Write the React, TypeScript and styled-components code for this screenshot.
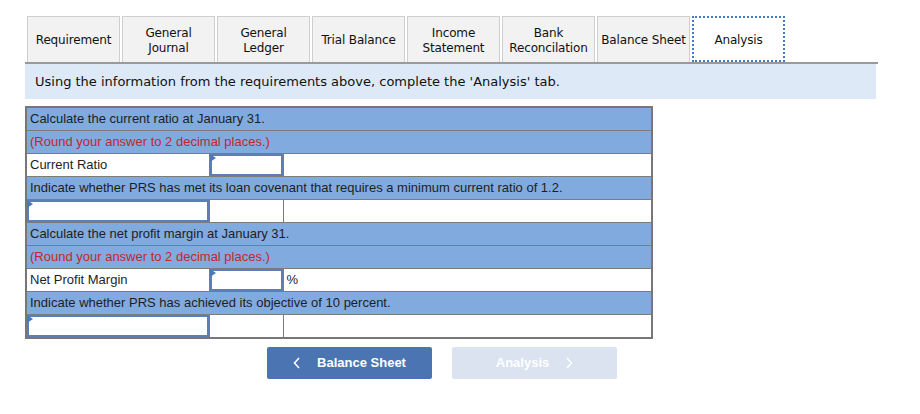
import React from 'react';
import styled, { createGlobalStyle } from 'styled-components';

const GlobalStyle = createGlobalStyle`
  body {
    margin: 0;
    background: #ffffff;
    font-family: "Liberation Sans", Arial, sans-serif;
  }
`;

const Page = styled.div`
  width: 920px;
  height: 414px;
  padding: 16px 0 0 25px;
  box-sizing: border-box;
`;

const TabBar = styled.div`
  display: flex;
  gap: 2px;
  width: 851px;
  padding-left: 2px;
  box-sizing: content-box;
  border-bottom: 2px solid #9a9a9a;
  height: 46px;
`;

const Tab = styled.div<{ $active?: boolean }>`
  width: 93px;
  height: 46px;
  box-sizing: border-box;
  display: flex;
  align-items: center;
  justify-content: center;
  text-align: center;
  padding-top: 2px;
  font-family: "DejaVu Sans", Verdana, sans-serif;
  font-size: 12px;
  line-height: 15px;
  letter-spacing: -0.15px;
  color: #111111;
  white-space: pre-line;
  background: ${(p) => (p.$active ? '#ffffff' : '#f2f2f2')};
  border: ${(p) => (p.$active ? '2px dotted #4a78c0' : '1px solid #cfcfcf')};
  border-bottom: ${(p) => (p.$active ? '2px dotted #4a78c0' : 'none')};
`;

const Instruction = styled.div`
  width: 851px;
  height: 35px;
  box-sizing: border-box;
  background: #dde9f7;
  padding-left: 10px;
  display: flex;
  align-items: center;
  font-family: "DejaVu Sans", Verdana, sans-serif;
  font-size: 13px;
  color: #111111;
`;

const Grid = styled.table`
  margin-top: 7px;
  width: 628px;
  border-collapse: collapse;
  border: 2px solid #777777;
  font-family: "Liberation Sans", Arial, sans-serif;
  font-size: 13px;
  color: #222222;
  table-layout: fixed;
`;

const Row = styled.tr<{ $blue?: boolean }>`
  height: 23px;
  background: ${(p) => (p.$blue ? '#81aadf' : '#ffffff')};
`;

const Cell = styled.td<{ $red?: boolean }>`
  border: 1px solid #7c7c7c;
  padding: 0 0 0 3px;
  height: 22px;
  box-sizing: border-box;
  color: ${(p) => (p.$red ? '#c2282b' : '#1e1e1e')};
  white-space: nowrap;
  vertical-align: middle;
`;

const InputCell = styled.td`
  border: 1px solid #7c7c7c;
  padding: 0;
  height: 22px;
  position: relative;
`;

const InputBox = styled.div`
  position: absolute;
  inset: 0;
  border: 2px solid #5a7fb8;
  background: #ffffff;
`;

const Marker = styled.span`
  position: absolute;
  left: 0;
  top: 0;
  width: 0;
  height: 0;
  border-top: 4px solid transparent;
  border-bottom: 4px solid transparent;
  border-left: 6px solid #4a78c0;
`;

const Buttons = styled.div`
  display: flex;
  justify-content: center;
  gap: 20px;
  width: 834px;
  margin-top: 8px;
`;

const NavButton = styled.button<{ $disabled?: boolean }>`
  width: 165px;
  height: 32px;
  border: none;
  border-radius: 2px;
  background: ${(p) => (p.$disabled ? '#dae3ef' : '#4a75b2')};
  color: #ffffff;
  font-family: "Liberation Sans", Arial, sans-serif;
  font-weight: bold;
  font-size: 13px;
  display: flex;
  align-items: center;
  justify-content: center;
  gap: 16px;
  padding: 0;
`;

const Chevron = ({ dir }: { dir: 'left' | 'right' }) => (
  <svg width="8" height="12" viewBox="0 0 8 12">
    <path
      d={dir === 'left' ? 'M6 1 L1.5 6 L6 11' : 'M2 1 L6.5 6 L2 11'}
      fill="none"
      stroke="#ffffff"
      strokeWidth="1.6"
    />
  </svg>
);

const Input = () => (
  <InputCell>
    <InputBox />
    <Marker />
  </InputCell>
);

const tabs = [
  'Requirement',
  'General\nJournal',
  'General\nLedger',
  'Trial Balance',
  'Income\nStatement',
  'Bank\nReconcilation',
  'Balance Sheet',
  'Analysis',
];

export default function App() {
  return (
    <Page>
      <GlobalStyle />
      <TabBar>
        {tabs.map((t) => (
          <Tab key={t} $active={t === 'Analysis'}>
            {t}
          </Tab>
        ))}
      </TabBar>
      <Instruction>Using the information from the requirements above, complete the 'Analysis' tab.</Instruction>
      <Grid>
        <colgroup>
          <col style={{ width: 183 }} />
          <col style={{ width: 74 }} />
          <col />
        </colgroup>
        <tbody>
          <Row $blue>
            <Cell colSpan={3}>Calculate the current ratio at January 31.</Cell>
          </Row>
          <Row $blue>
            <Cell colSpan={3} $red>(Round your answer to 2 decimal places.)</Cell>
          </Row>
          <Row>
            <Cell>Current Ratio</Cell>
            <Input />
            <Cell />
          </Row>
          <Row $blue>
            <Cell colSpan={3}>Indicate whether PRS has met its loan covenant that requires a minimum current ratio of 1.2.</Cell>
          </Row>
          <Row>
            <Input />
            <Cell />
            <Cell />
          </Row>
          <Row $blue>
            <Cell colSpan={3}>Calculate the net profit margin at January 31.</Cell>
          </Row>
          <Row $blue>
            <Cell colSpan={3} $red>(Round your answer to 2 decimal places.)</Cell>
          </Row>
          <Row>
            <Cell>Net Profit Margin</Cell>
            <Input />
            <Cell>%</Cell>
          </Row>
          <Row $blue>
            <Cell colSpan={3}>Indicate whether PRS has achieved its objective of 10 percent.</Cell>
          </Row>
          <Row>
            <Input />
            <Cell />
            <Cell />
          </Row>
        </tbody>
      </Grid>
      <Buttons>
        <NavButton>
          <Chevron dir="left" />
          Balance Sheet
        </NavButton>
        <NavButton $disabled>
          Analysis
          <Chevron dir="right" />
        </NavButton>
      </Buttons>
    </Page>
  );
}
